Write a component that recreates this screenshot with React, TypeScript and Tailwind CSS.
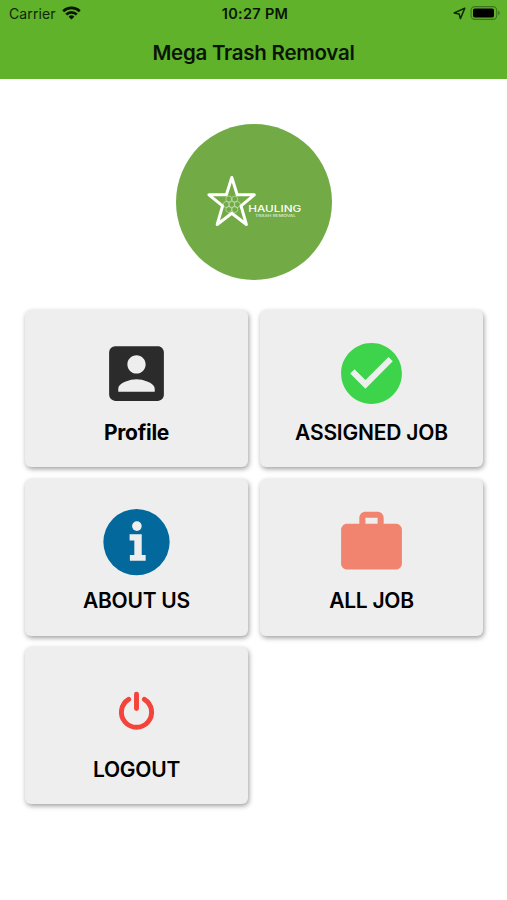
import type { ReactNode } from "react";

const StatusBar = () => {
  return (
    <div className="flex h-7 items-center justify-between pr-[6px] pl-[9px] text-[14px]">
      <div className="flex w-[120px] items-center gap-[6px]">
        <span className="-mt-px tracking-[0.1px] text-[#10250a]">Carrier</span>
        <svg width="19" height="14" viewBox="0 0 19 14" fill="none" stroke="#0b1506" strokeWidth="2.6" className="-mt-0.5">
          <path d="M1.2 5.2a12 12 0 0 1 16.6 0" />
          <path d="M4.2 8.5a7.6 7.6 0 0 1 10.6 0" />
          <path d="M9.5 13.6l-2.9-2.9a4.1 4.1 0 0 1 5.8 0z" fill="#0b1506" stroke="none" />
        </svg>
      </div>
      <span className="text-[14.5px] font-semibold tracking-[0.3px] whitespace-nowrap">10:27 PM</span>
      <div className="flex w-[120px] items-center justify-end gap-[4px]">
        <svg width="13" height="13" viewBox="0 0 13 13" fill="none" stroke="#10250a" strokeWidth="1.5" strokeLinejoin="round" className="-mt-0.5">
          <path d="M11.8 1.3L1.2 5.9l5 1.2 1.2 4.5z" />
        </svg>
        <svg width="31" height="14" viewBox="0 0 31 14" className="-mt-0.5">
          <rect x="1.1" y="0.6" width="25.6" height="12.8" rx="3.8" fill="none" stroke="#3b761d" strokeWidth="1.1" />
          <rect x="3" y="2.5" width="21" height="9" rx="1.8" fill="#000" />
          <path d="M28.2 4.7c2 .7 2 3.9 0 4.6z" fill="#3b761d" />
        </svg>
      </div>
    </div>
  );
};

const Logo = () => {
  return (
    <svg width="157" height="157" viewBox="0 0 157 157">
      <circle cx="78" cy="79" r="78" fill="#72ab46" />
      <path
        d="M55.8 54.5l5.4 17.3h17.1L65 82.9l5.4 18.6-14.6-11.2-14.6 11.2 5.4-18.6-13.7-11.1h17.5z"
        fill="none"
        stroke="#fff"
        strokeWidth="3"
        strokeLinejoin="round"
      />
      <g fill="none" stroke="#d3e6c5" strokeWidth="0.6">
        <circle cx="52.8" cy="76" r="3" />
        <circle cx="58.8" cy="76" r="3" />
        <circle cx="50.3" cy="81.5" r="3" />
        <circle cx="55.8" cy="81.5" r="3" />
        <circle cx="61.3" cy="81.5" r="3" />
        <circle cx="52.8" cy="86.5" r="3" />
        <circle cx="58.8" cy="86.5" r="3" />
      </g>
      <text x="72.3" y="89.3" textLength="53" lengthAdjust="spacingAndGlyphs" fontSize="8.4" fontWeight="500" fill="#fff">
        HAULING
      </text>
      <text x="79" y="93.8" textLength="41" lengthAdjust="spacingAndGlyphs" fontSize="3.6" fontWeight="500" fill="#e0eed6">
        TRASH REMOVAL
      </text>
    </svg>
  );
};

const ProfileIcon = () => (
  <svg width="73" height="73" viewBox="0 0 24 24" fill="#2b2b2b">
    <path d="M3 5v14a2 2 0 0 0 2 2h14c1.1 0 2-.9 2-2V5c0-1.1-.9-2-2-2H5a2 2 0 0 0-2 2zm12 4c0 1.66-1.34 3-3 3s-3-1.34-3-3 1.34-3 3-3 3 1.34 3 3zm-9 8c0-2 4-3.1 6-3.1s6 1.1 6 3.1v1H6v-1z" />
  </svg>
);

const CheckIcon = () => (
  <svg width="73" height="73" viewBox="0 0 24 24" fill="#3dd34a">
    <path d="M12 2C6.48 2 2 6.48 2 12s4.48 10 10 10 10-4.48 10-10S17.52 2 12 2zm-2 15l-5-5 1.41-1.41L10 14.17l7.59-7.59L19 8l-9 9z" />
  </svg>
);

const InfoIcon = () => (
  <svg width="73" height="73" viewBox="0 0 74 74">
    <circle cx="37" cy="37.6" r="33.6" fill="#03699d" />
    <circle cx="37.4" cy="21.4" r="4.9" fill="#eee" />
    <path d="M30 29.6h12.3v21.2h4v5.8H30.3v-5.8h4.5V36.1H30z" fill="#eee" />
  </svg>
);

const BriefcaseIcon = () => (
  <svg width="73" height="73" viewBox="0 -0.2 24 24" fill="#f1846f">
    <path d="M20 6h-4V4c0-1.11-.89-2-2-2h-4c-1.11 0-2 .89-2 2v2H4c-1.11 0-1.99.89-1.99 2L2 19c0 1.11.89 2 2 2h16c1.11 0 2-.89 2-2V8c0-1.11-.89-2-2-2zm-6 0h-4V4h4v2z" />
  </svg>
);

const PowerIcon = () => (
  <svg width="73" height="73" viewBox="0 0 74 74" fill="none" stroke="#f4433a" strokeWidth="5" strokeLinecap="round">
    <path d="M37 20.5v14.5" />
    <path d="M29 25.7a15.3 15.3 0 1 0 16 0" />
  </svg>
);

type CardProps = {
  label: string;
  icon: ReactNode;
  className: string;
};

const MenuCard = ({ label, icon, className }: CardProps) => {
  return (
    <button className="flex h-[157px] flex-col items-center rounded-[6px] bg-[#eeeeee] pt-[26.5px] shadow-[1px_2px_5px_rgba(0,0,0,0.38)]">
      {icon}
      <span className={`mt-[9.4px] text-[21px] leading-[28px] whitespace-nowrap text-black ${className}`}>{label}</span>
    </button>
  );
};

const items: CardProps[] = [
  { label: "Profile", icon: <ProfileIcon />, className: "font-bold tracking-[-0.25px]" },
  { label: "ASSIGNED JOB", icon: <CheckIcon />, className: "font-semibold tracking-[-0.2px]" },
  { label: "ABOUT US", icon: <InfoIcon />, className: "font-semibold tracking-[-0.25px]" },
  { label: "ALL JOB", icon: <BriefcaseIcon />, className: "font-semibold tracking-[-0.3px]" },
  { label: "LOGOUT", icon: <PowerIcon />, className: "font-semibold tracking-[-0.25px]" },
];

const App = () => {
  return (
    <div className="min-h-[900px] w-full bg-white font-['Inter','Liberation_Sans',sans-serif] text-[#0b1506]">
      <header className="h-[79px] bg-[#5fb229]">
        <StatusBar />
        <h1 className="text-center text-[20.5px] leading-[49px] font-semibold tracking-[-0.25px]">Mega Trash Removal</h1>
      </header>

      <main>
        <div className="flex justify-center pt-[44px] pl-px">
          <Logo />
        </div>
        <div className="mt-[30px] grid grid-cols-2 gap-x-[12px] gap-y-[11.6px] pr-[24px] pl-[25px]">
          {items.map((item) => (
            <MenuCard key={item.label} {...item} />
          ))}
        </div>
      </main>
    </div>
  );
};

export default App;
